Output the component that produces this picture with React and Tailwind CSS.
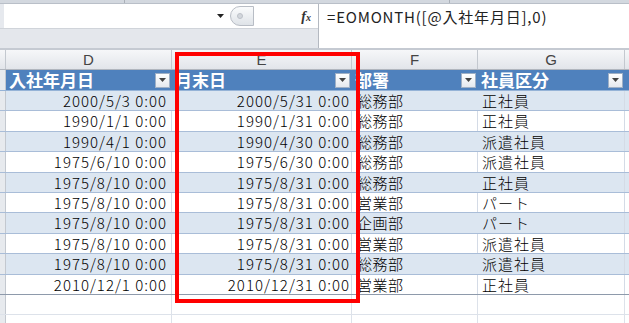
import React from "react";

const rows = [
  ["2000/5/3 0:00", "2000/5/31 0:00", "総務部", "正社員"],
  ["1990/1/1 0:00", "1990/1/31 0:00", "総務部", "正社員"],
  ["1990/4/1 0:00", "1990/4/30 0:00", "総務部", "派遣社員"],
  ["1975/6/10 0:00", "1975/6/30 0:00", "総務部", "派遣社員"],
  ["1975/8/10 0:00", "1975/8/31 0:00", "総務部", "正社員"],
  ["1975/8/10 0:00", "1975/8/31 0:00", "営業部", "パート"],
  ["1975/8/10 0:00", "1975/8/31 0:00", "企画部", "パート"],
  ["1975/8/10 0:00", "1975/8/31 0:00", "営業部", "派遣社員"],
  ["1975/8/10 0:00", "1975/8/31 0:00", "総務部", "派遣社員"],
  ["2010/12/1 0:00", "2010/12/31 0:00", "営業部", "正社員"],
];

const font = { fontFamily: '"Noto Sans CJK JP", "Liberation Sans", sans-serif' };

export default function App() {
  return (
    <div className="relative w-[629px] h-[323px] overflow-hidden bg-white text-[#1a1a1a]" style={font}>
      {/* ribbon edge */}
      <div className="h-[4px] bg-[#d3d8df] border-b border-[#b9bfc8] flex">
        <div className="w-[125px] border-r border-[#aab0b8]" />
        <div className="w-[325px] border-r border-[#aab0b8]" />
      </div>

      {/* formula bar */}
      <div className="flex h-[46px] border-b-2 border-[#c5cad2]">
        <div className="w-[318px] flex flex-col">
          <div className="h-[24px] flex items-center bg-white">
            <div className="w-[4px] h-full bg-[#e6e9ee]" />
            <div className="w-[226px] h-full flex items-center justify-end pr-[6px]">
              <Caret />
            </div>
            <RoundButton />
            <div className="flex-1 flex justify-end pr-[7px]">
              <span className="italic font-bold text-[14px] text-[#333]" style={{ fontFamily: '"Liberation Serif", serif' }}>
                f<span className="text-[10px]">x</span>
              </span>
            </div>
          </div>
          <div className="flex-1 bg-[#e4e7ec] border-t border-[#d0d4da]" />
        </div>
        <div className="flex-1 bg-white border-l border-[#b4b9c1] pl-[8px] pt-[2px] text-[15px] tracking-[0.8px] text-[#222] leading-[22px]">
          =EOMONTH([@入社年月日],0)
        </div>
      </div>

      {/* column letters */}
      <div className="flex h-[20px] bg-gradient-to-b from-[#f6f7f9] to-[#e2e5ea] border-b border-[#b1b6be] text-[15px] text-[#444]" style={{ fontFamily: '"Liberation Sans", sans-serif' }}>
        <div className="w-[6px] border-r border-[#c3c8cf]" />
        <HeadCell w="w-[166px]">D</HeadCell>
        <HeadCell w="w-[180px]">E</HeadCell>
        <HeadCell w="w-[126px]">F</HeadCell>
        <HeadCell w="w-[147px]">G</HeadCell>
        <div className="flex-1" />
      </div>

      {/* table header */}
      <div className="flex h-[21px] border-b border-[#95b3d7]">
        <div className="w-[6px] bg-[#e7eaee] border-r border-[#c3c8cf]" />
        <div className="flex flex-1 bg-[#4f81bd] text-white font-bold text-[17px] leading-[20px]">
          <TitleCell w="w-[166px]">入社年月日</TitleCell>
          <TitleCell w="w-[180px]">月末日</TitleCell>
          <TitleCell w="w-[126px]">部署</TitleCell>
          <TitleCell w="w-[147px]">社員区分</TitleCell>
          <div className="flex-1" />
        </div>
      </div>

      {/* table body */}
      {rows.map((r, i) => {
        const band = i % 2 === 0;
        const line = band ? "border-transparent" : "border-[#d4dbe6]";
        return (
          <div
            key={i}
            className={`flex h-[20.4px] text-[15px] font-light text-black leading-[19px] border-b ${
              i === rows.length - 1 ? "border-[#8e9aab]" : "border-[#a9bdd8]"
            } ${band ? "bg-[#dce6f1]" : "bg-white"}`}
          >
            <div className="w-[6px] bg-[#e7eaee] border-r border-[#c3c8cf]" />
            <div className={`w-[166px] text-right pr-[4px] tracking-[1px] border-r ${line}`}>{r[0]}</div>
            <div className={`w-[180px] text-right pr-[1px] tracking-[1px] border-r ${line}`}>{r[1]}</div>
            <div className={`w-[126px] pl-[5px] tracking-[0.5px] border-r ${line}`}>{r[2]}</div>
            <div className="w-[147px] pl-[4px] tracking-[1px] border-r border-[#d4dbe6]">{r[3]}</div>
            <div className="flex-1" />
          </div>
        );
      })}

      {/* empty sheet rows */}
      {[0, 1].map((i) => (
        <div key={i} className="flex h-[20.4px] border-b border-[#dde2ea]">
          <div className="w-[6px] bg-[#e7eaee] border-r border-[#c3c8cf]" />
          <div className="w-[166px] border-r border-[#dde2ea]" />
          <div className="w-[180px] border-r border-[#dde2ea]" />
          <div className="w-[126px] border-r border-[#dde2ea]" />
          <div className="w-[147px] border-r border-[#dde2ea]" />
        </div>
      ))}

      {/* highlight frame around column E */}
      <div className="absolute left-[175px] top-[52px] w-[185px] h-[251px] border-[4px] border-[#ff0000]" />
    </div>
  );
}

function HeadCell({ w, children }) {
  return (
    <div className={`${w} border-r border-[#c3c8cf] flex items-center justify-center leading-none`}>
      {children}
    </div>
  );
}

function TitleCell({ w, children }) {
  return (
    <div className={`${w} flex items-center justify-between pl-[3px] pr-[2px]`}>
      <span>{children}</span>
      <FilterButton />
    </div>
  );
}

function FilterButton() {
  return (
    <div className="w-[15px] h-[15px] bg-gradient-to-b from-white to-[#e4e8ee] border border-[#9fb0c6] flex items-center justify-center">
      <svg width="7" height="4" viewBox="0 0 7 4">
        <path d="M0 0h7L3.5 4z" fill="#444" />
      </svg>
    </div>
  );
}

function Caret() {
  return (
    <svg width="7" height="4" viewBox="0 0 7 4">
      <path d="M0 0h7L3.5 4z" fill="#222" />
    </svg>
  );
}

function RoundButton() {
  return (
    <div className="w-[24px] h-[20px] rounded-l-full border border-[#b8bdc5] bg-gradient-to-b from-[#fafbfc] to-[#dfe3e8] flex items-center pl-[6px]">
      <div className="w-[6px] h-[6px] rounded-full bg-[#d2d6dc] border border-[#bcc1c8]" />
    </div>
  );
}
